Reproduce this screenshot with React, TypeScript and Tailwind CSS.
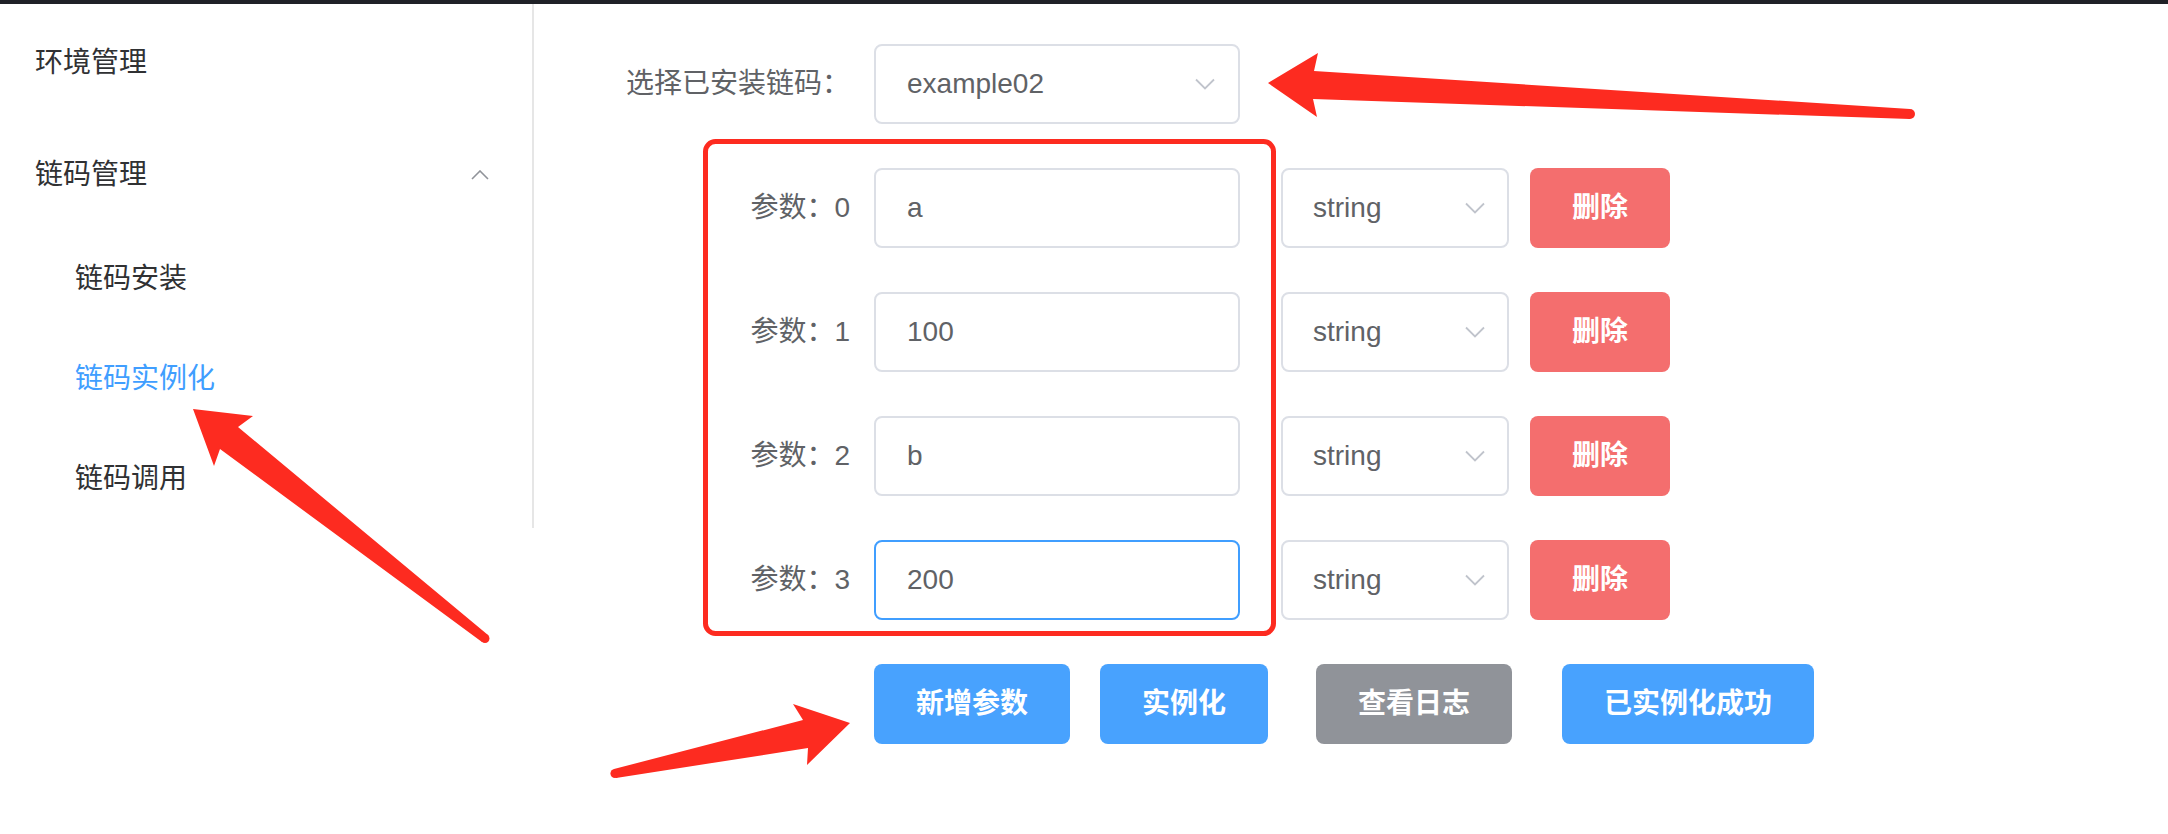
import React from "react";

function ChevronDown({ className }: { className?: string }) {
  return (
    <svg className={className} width="20" height="12" viewBox="0 0 20 12" fill="none">
      <path d="M1 1.5 L10 10.5 L19 1.5" stroke="#c0c4cc" strokeWidth="1.8" />
    </svg>
  );
}

function ChevronUp() {
  return (
    <svg width="18" height="10" viewBox="0 0 18 10" fill="none">
      <path d="M1 9 L9 1 L17 9" stroke="#909399" strokeWidth="1.6" />
    </svg>
  );
}

const params = [
  { v: "a", focused: false },
  { v: "100", focused: false },
  { v: "b", focused: false },
  { v: "200", focused: true },
];

export default function App() {
  return (
    <div className="relative w-[2168px] h-[834px] bg-white overflow-hidden font-['Liberation_Sans','Noto_Sans_CJK_SC',sans-serif]">
      <div className="h-[4px] bg-[#1f2127]" />
      <div className="flex">
        <aside className="w-[534px] h-[524px] border-r-2 border-[#e6e6e6] text-[28px] text-[#303133] leading-none">
          <div className="h-[112px] flex items-center pl-[35px] pt-[6px]">环境管理</div>
          <div className="h-[112px] flex items-center justify-between pl-[35px] pr-[43px] pt-[6px]">
            <span>链码管理</span>
            <ChevronUp />
          </div>
          <div className="h-[100px] flex items-center pl-[75px] pt-[2px]">链码安装</div>
          <div className="h-[100px] flex items-center pl-[75px] pt-[2px] text-[#409eff]">链码实例化</div>
          <div className="h-[100px] flex items-center pl-[75px] pt-[2px]">链码调用</div>
        </aside>
        <main className="pl-[80px] pt-[40px] text-[28px] leading-none text-[#606266]">
          <div className="flex items-center h-[80px] mb-[44px]">
            <label className="w-[260px] pr-[24px] text-right">选择已安装链码：</label>
            <div className="w-[366px] h-[80px] border-2 border-[#dcdfe6] rounded-[8px] flex items-center justify-between pl-[31px] pr-[23px]">
              <span>example02</span>
              <ChevronDown />
            </div>
          </div>
          {params.map((p, i) => (
            <div key={i} className="flex items-center h-[80px] mb-[44px]">
              <label className="w-[260px] pr-[24px] text-right">参数：{i}</label>
              <div
                className={
                  p.focused
                    ? "w-[366px] h-[80px] border-2 border-[#409eff] rounded-[8px] flex items-center pl-[31px]"
                    : "w-[366px] h-[80px] border-2 border-[#dcdfe6] rounded-[8px] flex items-center pl-[31px]"
                }
              >
                {p.v}
              </div>
              <div className="ml-[41px] w-[228px] h-[80px] border-2 border-[#dcdfe6] rounded-[8px] flex items-center justify-between pl-[30px] pr-[22px]">
                <span>string</span>
                <ChevronDown />
              </div>
              <button className="ml-[21px] w-[140px] h-[80px] rounded-[8px] bg-[#f46e6e] text-white font-semibold flex items-center justify-center">
                删除
              </button>
            </div>
          ))}
          <div className="flex items-center h-[80px] ml-[260px]">
            <button className="w-[196px] h-[80px] rounded-[8px] bg-[#48a2fe] text-white font-semibold">新增参数</button>
            <button className="ml-[30px] w-[168px] h-[80px] rounded-[8px] bg-[#48a2fe] text-white font-semibold">实例化</button>
            <button className="ml-[48px] w-[196px] h-[80px] rounded-[8px] bg-[#909399] text-white font-semibold">查看日志</button>
            <button className="ml-[50px] w-[252px] h-[80px] rounded-[8px] bg-[#48a2fe] text-white font-semibold">已实例化成功</button>
          </div>
        </main>
      </div>
      <svg className="absolute inset-0 pointer-events-none" width="2168" height="834" viewBox="0 0 2168 834">
        <rect x="705.5" y="141.5" width="568" height="492" rx="10" fill="none" stroke="#fd2b20" strokeWidth="5" />
        <g fill="#fd2b20">
          <polygon points="1268,83 1318,53 1314,71 1910,109 1910,119 1313,99 1317,117" />
          <circle cx="1910" cy="114" r="5" />
          <polygon points="193,409 253,416 238,427 488,635 482,642 220,449 214,466" />
          <circle cx="485" cy="638.5" r="4.5" />
          <polygon points="850,723 793,704 803,720 614,769 616,778 808,748 807,765" />
          <circle cx="615" cy="773.5" r="4.6" />
        </g>
      </svg>
    </div>
  );
}
